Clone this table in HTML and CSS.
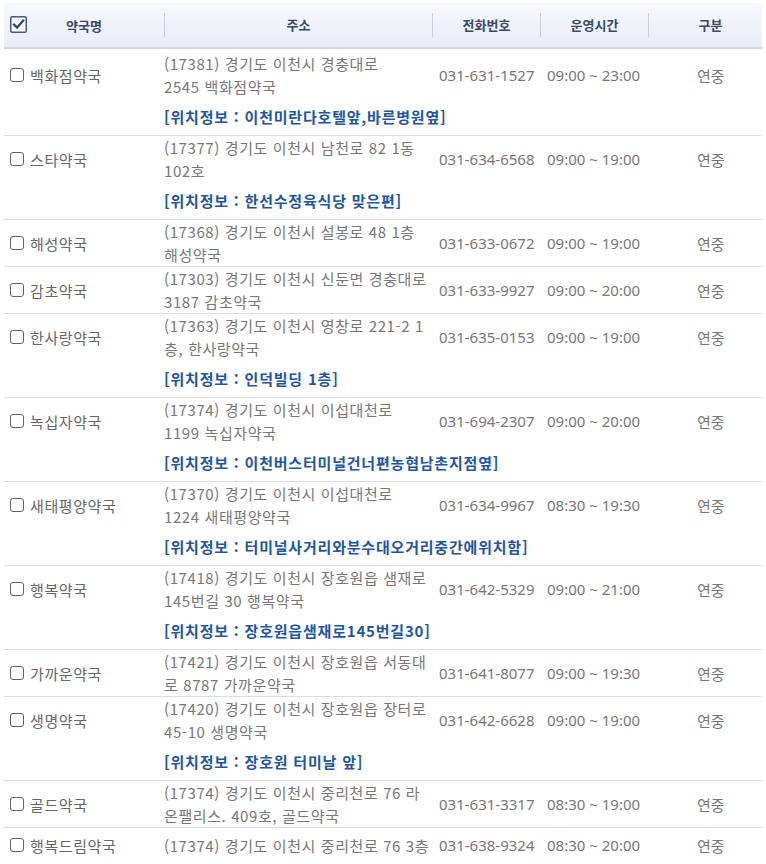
FILE: index.html
```html
<!DOCTYPE html>
<html lang="ko">
<head>
    <meta charset="UTF-8">
    <title>약국 목록</title>
    <link rel="stylesheet" href="styles.css">
</head>
<body>
<div class="wrap">
    <table class="list">
        <colgroup>
            <col class="c-name">
            <col class="c-addr">
            <col class="c-tel">
            <col class="c-time">
            <col class="c-type">
        </colgroup>
        <thead>
        <tr>
            <th class="th-name">
                <span class="all-check">
                    <svg width="17" height="17" viewBox="0 0 17 17">
                        <rect x="0.75" y="0.75" width="15.5" height="15.5" rx="1.5" fill="#fff" stroke="#43598a" stroke-width="1.5"/>
                        <path d="M4 8.6 L7 11.6 L13.2 4.6" fill="none" stroke="#2f4777" stroke-width="2.4" stroke-linecap="square"/>
                    </svg>
                </span>
                약국명
            </th>
            <th><span class="sep">주소</span></th>
            <th><span class="sep">전화번호</span></th>
            <th><span class="sep">운영시간</span></th>
            <th class="th-type"><span class="sep">구분</span></th>
        </tr>
        </thead>
        <tbody>
        <!-- 1 -->
        <tr class="first">
            <td><span class="name"><i class="chk"></i>백화점약국</span></td>
            <td class="addr">(17381) 경기도 이천시 경충대로<br>2545 백화점약국</td>
            <td class="tel">031-631-1527</td>
            <td class="time">09:00 ~ 23:00</td>
            <td class="type">연중</td>
        </tr>
        <tr class="info last">
            <td></td>
            <td colspan="4">[위치정보 : 이천미란다호텔앞,바른병원옆]</td>
        </tr>
        <!-- 2 -->
        <tr>
            <td><span class="name"><i class="chk"></i>스타약국</span></td>
            <td class="addr">(17377) 경기도 이천시 남천로 82 1동<br>102호</td>
            <td class="tel">031-634-6568</td>
            <td class="time">09:00 ~ 19:00</td>
            <td class="type">연중</td>
        </tr>
        <tr class="info last">
            <td></td>
            <td colspan="4">[위치정보 : 한선수정육식당 맞은편]</td>
        </tr>
        <!-- 3 -->
        <tr class="last">
            <td><span class="name"><i class="chk"></i>해성약국</span></td>
            <td class="addr">(17368) 경기도 이천시 설봉로 48 1층<br>해성약국</td>
            <td class="tel">031-633-0672</td>
            <td class="time">09:00 ~ 19:00</td>
            <td class="type">연중</td>
        </tr>
        <!-- 4 -->
        <tr class="last">
            <td><span class="name"><i class="chk"></i>감초약국</span></td>
            <td class="addr">(17303) 경기도 이천시 신둔면 경충대로<br>3187 감초약국</td>
            <td class="tel">031-633-9927</td>
            <td class="time">09:00 ~ 20:00</td>
            <td class="type">연중</td>
        </tr>
        <!-- 5 -->
        <tr>
            <td><span class="name"><i class="chk"></i>한사랑약국</span></td>
            <td class="addr">(17363) 경기도 이천시 영창로 221-2 1<br>층, 한사랑약국</td>
            <td class="tel">031-635-0153</td>
            <td class="time">09:00 ~ 19:00</td>
            <td class="type">연중</td>
        </tr>
        <tr class="info last">
            <td></td>
            <td colspan="4">[위치정보 : 인덕빌딩 1층]</td>
        </tr>
        <!-- 6 -->
        <tr>
            <td><span class="name"><i class="chk"></i>녹십자약국</span></td>
            <td class="addr">(17374) 경기도 이천시 이섭대천로<br>1199 녹십자약국</td>
            <td class="tel">031-694-2307</td>
            <td class="time">09:00 ~ 20:00</td>
            <td class="type">연중</td>
        </tr>
        <tr class="info last">
            <td></td>
            <td colspan="4">[위치정보 : 이천버스터미널건너편농협남촌지점옆]</td>
        </tr>
        <!-- 7 -->
        <tr>
            <td><span class="name"><i class="chk"></i>새태평양약국</span></td>
            <td class="addr">(17370) 경기도 이천시 이섭대천로<br>1224 새태평양약국</td>
            <td class="tel">031-634-9967</td>
            <td class="time">08:30 ~ 19:30</td>
            <td class="type">연중</td>
        </tr>
        <tr class="info last">
            <td></td>
            <td colspan="4">[위치정보 : 터미널사거리와분수대오거리중간에위치함]</td>
        </tr>
        <!-- 8 -->
        <tr>
            <td><span class="name"><i class="chk"></i>행복약국</span></td>
            <td class="addr">(17418) 경기도 이천시 장호원읍 샘재로<br>145번길 30 행복약국</td>
            <td class="tel">031-642-5329</td>
            <td class="time">09:00 ~ 21:00</td>
            <td class="type">연중</td>
        </tr>
        <tr class="info last">
            <td></td>
            <td colspan="4">[위치정보 : 장호원읍샘재로145번길30]</td>
        </tr>
        <!-- 9 -->
        <tr class="last">
            <td><span class="name"><i class="chk"></i>가까운약국</span></td>
            <td class="addr">(17421) 경기도 이천시 장호원읍 서동대<br>로 8787 가까운약국</td>
            <td class="tel">031-641-8077</td>
            <td class="time">09:00 ~ 19:30</td>
            <td class="type">연중</td>
        </tr>
        <!-- 10 -->
        <tr>
            <td><span class="name"><i class="chk"></i>생명약국</span></td>
            <td class="addr">(17420) 경기도 이천시 장호원읍 장터로<br>45-10 생명약국</td>
            <td class="tel">031-642-6628</td>
            <td class="time">09:00 ~ 19:00</td>
            <td class="type">연중</td>
        </tr>
        <tr class="info last">
            <td></td>
            <td colspan="4">[위치정보 : 장호원 터미날 앞]</td>
        </tr>
        <!-- 11 -->
        <tr class="last">
            <td><span class="name"><i class="chk"></i>골드약국</span></td>
            <td class="addr">(17374) 경기도 이천시 중리천로 76 라<br>온팰리스. 409호, 골드약국</td>
            <td class="tel">031-631-3317</td>
            <td class="time">08:30 ~ 19:00</td>
            <td class="type">연중</td>
        </tr>
        <!-- 12 -->
        <tr>
            <td><span class="name"><i class="chk"></i>행복드림약국</span></td>
            <td class="addr">(17374) 경기도 이천시 중리천로 76 3층</td>
            <td class="tel">031-638-9324</td>
            <td class="time">08:30 ~ 20:00</td>
            <td class="type">연중</td>
        </tr>
        </tbody>
    </table>
</div>
</body>
</html>
```

FILE: styles.css
```css
*{
    margin: 0;
    padding: 0;
}
body{
    font-family: "Noto Sans CJK KR", "Noto Sans", sans-serif;
    font-size: 15px;
    color: #777;
    background: #fff;
}
.wrap{
    padding: 3px 4px 0;
}

.list{
    width: 758px;
    table-layout: fixed;
    border-collapse: collapse;
}
.c-name{ width: 160px; }
.c-addr{ width: 268px; }
.c-tel{ width: 108px; }
.c-time{ width: 108px; }
.c-type{ width: 114px; }

/* 머리글 */
.list thead th{
    height: 44px;
    padding: 0;
    background: linear-gradient(#f6f8fc, #e9eef7);
    border-bottom: 2px solid #d3d6dc;
    font-size: 13px;
    font-weight: bold;
    color: #3a4866;
    text-align: center;
    vertical-align: middle;
}
.list thead th .sep{
    display: block;
    line-height: 24px;
    border-left: 1px solid #c9cfd9;
}
.list thead th.th-type .sep{
    padding-left: 10px;
}
.th-name{
    position: relative;
}
.all-check{
    position: absolute;
    left: 6px;
    top: 13px;
    width: 17px;
    height: 17px;
}
.all-check svg{
    display: block;
}

/* 목록 */
.list tbody td{
    height: 34px;
    padding: 0;
    line-height: 23px;
    vertical-align: middle;
    white-space: nowrap;
}
.list tbody tr.first td{
    padding-top: 3px;
}
.list tbody tr.last td{
    border-bottom: 1px solid #dddddd;
}
.name{
    display: flex;
    align-items: center;
    gap: 6px;
    padding-left: 6px;
    color: #666;
    letter-spacing: 0.6px;
}
.chk{
    display: block;
    width: 12px;
    height: 12px;
    border: 1.5px solid #626262;
    border-radius: 3px;
    background: #fff;
}
.addr{
    letter-spacing: 0.6px;
}
.tel,
.time{
    padding-left: 7px !important;
    font-family: "Noto Sans", sans-serif;
}
.type{
    padding-left: 49px !important;
}

/* 위치정보 */
.list tr.info td{
    height: 36px;
    padding: 0 0 1px;
    font-weight: bold;
    letter-spacing: 0.8px;
    color: #1d56a3;
}
```
